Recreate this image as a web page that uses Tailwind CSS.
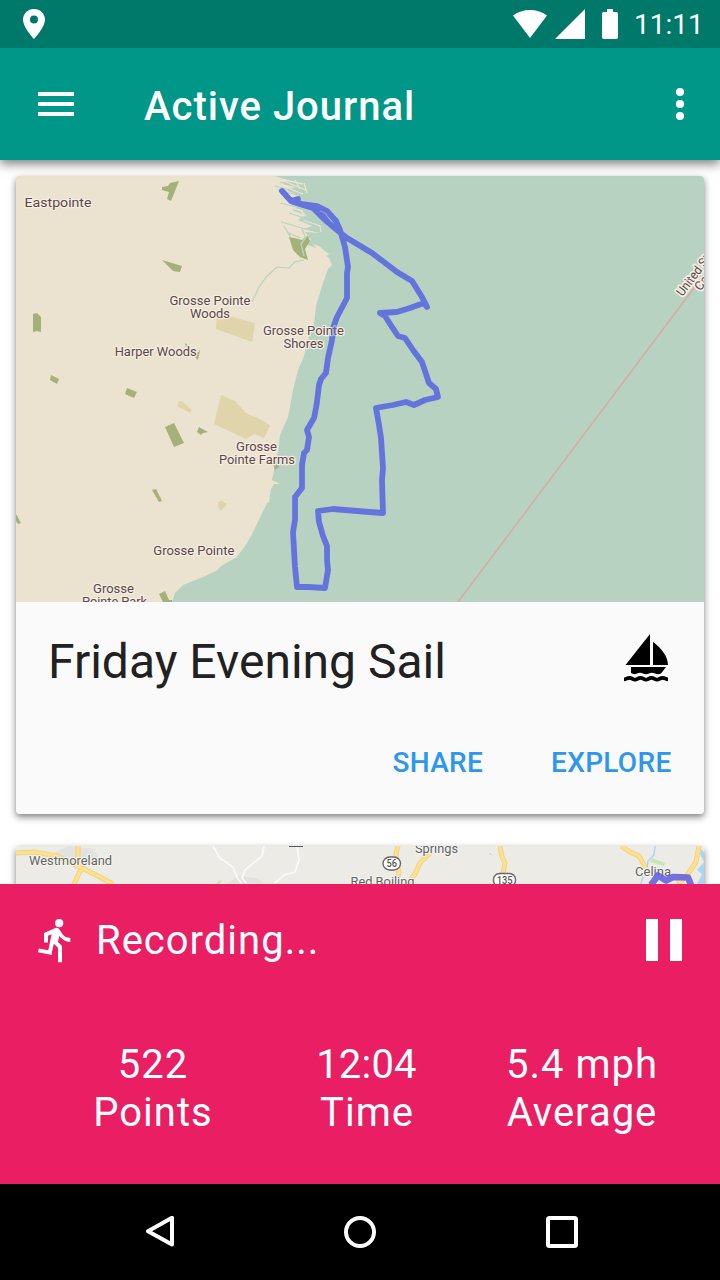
<!DOCTYPE html>
<html lang="en">
<head>
<meta charset="utf-8">
<title>Active Journal</title>
<script src="https://cdn.jsdelivr.net/npm/@tailwindcss/browser@4"></script>
</head>
<body class="bg-white">
<div class="flex h-[1280px] w-[720px] flex-col overflow-hidden bg-white font-['Roboto',sans-serif]">
  <div class="z-20 flex h-12 shrink-0 items-center bg-[#00796b] pr-[17px] pl-[23px] text-white">
    <svg class="h-[30px] w-[22px]" viewBox="0 0 22 30" fill="currentColor"><path fill-rule="evenodd" d="M11 0C4.900 0 0 4.800 0 10.500C0 18.400 11 30 11 30S22 18.400 22 10.500C22 4.800 17.100 0 11 0ZM11 14.500a4 4 0 1 1 0-8a4 4 0 0 1 0 8Z"/></svg>
    <div class="ml-auto flex items-center">
      <svg class="h-[30px] w-[108px]" viewBox="0 0 108 30" fill="currentColor">
        <path d="M1 6.500Q8.500 1 18 1T35 6.500L18 29Z"/>
        <path d="M73 0V30H43Z"/>
        <path d="M95 0h6v3h3.200a1.800 1.800 0 0 1 1.800 1.800v23.400a1.800 1.800 0 0 1-1.800 1.800h-12.400a1.800 1.800 0 0 1-1.800-1.800V4.800a1.800 1.800 0 0 1 1.800-1.800H95Z"/>
      </svg>
      <span class="mr-[-1px] ml-[14px] w-[70px] pt-[2px] text-[28px] leading-8 tracking-[0px]">11:11</span>
    </div>
  </div>
  <header class="z-10 flex h-28 shrink-0 items-center bg-[#009688] pr-9 pl-[38px] text-white shadow-[0_4px_10px_rgba(0,0,0,0.5)]">
    <svg class="h-6 w-9" viewBox="0 0 36 24" fill="currentColor"><path d="M0 0h36v4H0zM0 10h36v4H0zM0 20h36v4H0z"/></svg>
    <h1 class="ml-[70px] pt-1.5 text-[40px] leading-[48px] font-medium tracking-[1px]">Active Journal</h1>
    <svg class="ml-auto h-8 w-2 overflow-visible" viewBox="0 0 8 32" fill="currentColor"><circle cx="4" cy="4" r="4.100"/><circle cx="4" cy="16" r="4.100"/><circle cx="4" cy="28" r="4.100"/></svg>
  </header>
  <main class="flex h-[724px] shrink-0 flex-col gap-8 overflow-hidden px-4 pt-4">
    <article class="h-[638px] shrink-0 overflow-hidden rounded-[4px] bg-[#fafafa] shadow-[0_3px_7px_rgba(0,0,0,0.5)]">
      <svg class="block h-[426px] w-[688px]" viewBox="16 176 688 426">
        <rect x="16" y="176" width="688" height="426" fill="#b7d2c1"/>
        <path fill="#ebe3cf" d="M16 176H275L289 181L282 184L296 187L286 190L299 196L287 199L300 205L292 210L305 215L298 220L312 226L304 229L321 233L305 232L311 240L306 244L318 249L329 258L332 265L328 269L322 286L316 306L314 324L310 331L308 342L304 356L298 370L293 390L288 417L280 435L278 452L272 480L280 484L274 484L271 489L269 502L267 503L253 532L247 543L237 557L226 563L220 567L216 571L203 577L183 585L175 593L172 602H16Z"/>
        <g fill="none" stroke="#b7d2c1" stroke-width="1.200">
          <path d="M252 302L259 287L267 276L277 267L289 268L295 262L304 260"/>
          <path d="M275 186L290 190M278 190L297 195M280 203L301 208M281 222L302 228L318 232M284 226L291 238L304 241M287 232L300 238M302 229L305 236M280 182L300 186M289 213L304 218"/>
        </g>
        <g fill="none" stroke="#ebe3cf" stroke-width="1.300">
          <path d="M276 178L303 184M286 182L306 190M290 189L303 194M295 180L300 189M304 183L307 193M288 207L303 211M300 210L306 216M303 220L320 226L321 232"/>
        </g>
        <path fill="#ebe3cf" d="M313 244L319 246L329 254L327 256L320 253Z"/>
        <g fill="#a5b179">
          <path d="M162 187L168 186L170 183L179 181L175 191L171 201L167 199L169 192L162 190Z"/>
          <path d="M162 260L182 266L180 272L173 271Z"/>
          <path d="M33 314L37 313L41 317V332L37 331L33 332Z"/>
          <path d="M289 237L302 240L305 237L308 236L310 241L305 249L308 260L300 257L293 250Z"/>
          <path d="M51 375L59 379L57 384L50 380Z"/>
          <path d="M127 388L137 392L134 398L125 394Z"/>
          <path d="M165 427L174 423L184 443L174 447Z"/>
          <path d="M199 427L208 432L203 433L201 435L197 432Z"/>
          <path d="M152 490L156 489L162 501L159 502Z"/>
          <path d="M16 514L21 523L18 524L16 521Z"/>
          <path d="M159 594L165 591L169 600L172 600V602H163Z"/>
          <path d="M273 464H279V467L275 470Z"/>
          <path d="M185 343L188 345L186 347ZM194 356L200 350L198 360Z"/>
        </g>
        <path d="M306 237L301 244L304 256" stroke="#b7d2c1" stroke-width="1.500" fill="none"/>
        <g fill="#dfd4aa">
          <path d="M217 313L255 323L252 342L216 329Z"/>
          <path d="M221 395L235 401L246 413L264 421L270 426L264 438L254 434L246 439L214 424Z"/>
          <path d="M179 401L183 402L192 410L190 413L177 406Z"/>
          <path d="M218 502L222 501L227 504L221 511L218 507ZM220 500L227 504L222 507Z"/>
        </g>
        <path d="M458 602L685 300L704 275" stroke="#d9a8a0" stroke-width="1.300" fill="none"/>
        <path fill="none" stroke="#6574dd" stroke-width="5.800" stroke-linecap="round" stroke-linejoin="round" d="M282 191L291 201L298 199L293 202L313 208L324 219L337 230L347 238L372 253L397 272L412 281L422 297L427 307L424 303L410 308L397 312L380 313L385 316L392 327L398 336L405 338L413 350L422 362L425 371L429 383L436 389L438 397L425 400L414 405L406 402L393 405L387 406L376 408L379 425L381 438L383 468L382 480L383 513L357 511L333 509L318 511L319 522L323 536L327 546V560L328 570L325 588L308 587L297 587L295 567L293 532L295 520L295 497L302 488L302 465L304 453L307 450L309 437L307 430L314 418L316 408L317 402L319 385L321 379L326 373L328 358L332 340L333 328L337 317L347 298L347 273L348 267L345 247L340 230L336 221L327 211L317 206L302 204L291 201"/>
        <path d="M314 207L322 211L333 226L322 216Z" fill="#6574dd" stroke="#6574dd" stroke-width="2"/>
        <path d="M320 211L325 213L327 215" stroke="#8f9be0" stroke-width="1.200" fill="none"/>
        <g class="font-['Roboto']" font-size="13" fill="#5f4745" stroke="#f4eee5" stroke-width="2.500" stroke-linejoin="round" paint-order="stroke" text-anchor="middle">
          <text x="58" y="206.500" font-size="13.700" textLength="67" lengthAdjust="spacingAndGlyphs">Eastpointe</text>
          <text x="210" y="304.500" textLength="81" lengthAdjust="spacingAndGlyphs">Grosse Pointe</text>
          <text x="210" y="317.500" textLength="40" lengthAdjust="spacingAndGlyphs">Woods</text>
          <text x="303.500" y="334.500" textLength="81" lengthAdjust="spacingAndGlyphs">Grosse Pointe</text>
          <text x="303.500" y="347.500" textLength="40" lengthAdjust="spacingAndGlyphs">Shores</text>
          <text x="155.700" y="356" textLength="82" lengthAdjust="spacingAndGlyphs">Harper Woods</text>
          <text x="256.500" y="450.500" textLength="41" lengthAdjust="spacingAndGlyphs">Grosse</text>
          <text x="257" y="463.500" textLength="76" lengthAdjust="spacingAndGlyphs">Pointe Farms</text>
          <text x="193.800" y="555" textLength="81" lengthAdjust="spacingAndGlyphs">Grosse Pointe</text>
          <text x="113.500" y="592.500" textLength="41" lengthAdjust="spacingAndGlyphs">Grosse</text>
          <text x="114.500" y="605.500" textLength="65" lengthAdjust="spacingAndGlyphs">Pointe Park</text>
          <g text-anchor="start" stroke-width="3.500">
            <text transform="translate(682.500 297) rotate(-53)" font-size="12.600" textLength="70" lengthAdjust="spacingAndGlyphs">United States</text>
            <text transform="translate(700.500 291.500) rotate(-53)" font-size="12.600">Canada</text>
          </g>
        </g>
        <path d="M335 322L333 338" stroke="#6574dd" stroke-width="5" opacity=".5"/>
      </svg>
      <div class="flex h-[120px] items-center justify-between pr-9 pl-8">
        <h2 class="text-[48px] leading-[56px] text-[#212121]">Friday Evening Sail</h2>
        <svg class="mt-[-8px] h-[48px] w-[44px]" viewBox="0 0 44 48" fill="#000"><path d="M26 0V31H1.500ZM29 8C37 14 44 22 44 31H29ZM7 33H42L37 39.500Q34 41 31 39.500T25 39.500T19 39.500T13 39.500Q10 41 7 39Z"/><path d="M0 45.400C2 45.400 3 43.800 5.500 43.800S9 45.700 11 45.700S14 43.800 16.500 43.800S20 45.700 22 45.700S25 43.800 27.500 43.800S31 45.700 33 45.700S36 43.800 38.500 43.800S42 45.400 44 45.400" fill="none" stroke="#000" stroke-width="3.800"/></svg>
      </div>
      <div class="flex h-[82px] items-center justify-end gap-[68px] pr-[32.500px] text-[28px] leading-8 font-medium tracking-[0.3px] text-[#2c96f0]">
        <span>SHARE</span>
        <span>EXPLORE</span>
      </div>
    </article>
    <article class="h-[638px] shrink-0 overflow-hidden rounded-[4px] bg-[#ecebe6] shadow-[0_3px_7px_rgba(0,0,0,0.5)]">
      <svg class="block h-[38px] w-[688px]" viewBox="16 846 688 38">
        <rect x="16" y="846" width="688" height="38" fill="#ecebe6"/>
        <g fill="#e2e2df"><path d="M50 855L68 846L94 849L100 862L78 867ZM226 884L238 876L257 878L265 884Z"/></g>
        <g fill="none" stroke="#fafafa" stroke-width="1.800">
          <path d="M213 846L220 858L233 867L238 879L242 884M264 846L262 856L245 870L242 878L247 884M297 846L299 860L295 872L284 875L274 884"/>
        </g>
        <g fill="none" stroke-linejoin="round">
          <g stroke="#f2d07c" stroke-width="5"><path d="M16 853L34 852L57 856L78 866L94 874L113 884M78 846V860L81 869L74 884M398 846L396 854L397 864L399 872L396 884M430 853L420 863L415 874L408 884M500 846L502 857L505 863L503 874M621 846L630 852L639 856L647 870M699 846L696 862L688 874L678 884"/></g>
          <g stroke="#fbe08d" stroke-width="3.400"><path d="M16 853L34 852L57 856L78 866L94 874L113 884M78 846V860L81 869L74 884M398 846L396 854L397 864L399 872L396 884M430 853L420 863L415 874L408 884M500 846L502 857L505 863L503 874M621 846L630 852L639 856L647 870M699 846L696 862L688 874L678 884"/></g>
        </g>
        <g fill="none" stroke="#a9d7f3" stroke-width="1.500"><path d="M655 846L654 855L648 861L647 867M643 876L641 884"/></g>
        <path fill="#a9d7f3" d="M704 852L701 849L700 854L704 862L697 870L702 874L697 884H704ZM490 853L493 856L489 854Z"/>
        <path fill="#c5e8b6" d="M652 858L665 863L664 866L650 862ZM216 884L218 881L222 880L220 884Z"/>
        <path d="M289 846H303" stroke="#555" stroke-width="2"/>
        <g class="font-['Roboto']" font-size="13" fill="#636363" stroke="#f5f5f1" stroke-width="2" stroke-linejoin="round" paint-order="stroke" text-anchor="middle">
          <text x="70.500" y="864.500" textLength="83" lengthAdjust="spacingAndGlyphs">Westmoreland</text>
          <text x="436.500" y="852.500" textLength="43" lengthAdjust="spacingAndGlyphs">Springs</text>
          <text x="382.500" y="886" textLength="64" lengthAdjust="spacingAndGlyphs">Red Boiling</text>
          <text x="653" y="875.500" textLength="36" lengthAdjust="spacingAndGlyphs">Celina</text>
        </g>
        <path d="M651 885L658 875.500L666 880.500L673 877L688 877.500L691 885" fill="none" stroke="#6663df" stroke-width="6.500" stroke-linejoin="round" opacity=".9"/>
        <g fill="#fff" stroke="#666" stroke-width="1.400"><rect x="383" y="857" width="17.500" height="13" rx="6.500"/><rect x="493.500" y="873.500" width="22" height="13" rx="6"/></g>
        <g class="font-['Roboto']" font-size="10.500" font-weight="500" fill="#555" text-anchor="middle"><text x="391.700" y="867.300" textLength="10.500" lengthAdjust="spacingAndGlyphs">56</text><text x="504.700" y="884.300" textLength="16" lengthAdjust="spacingAndGlyphs">135</text></g>
      </svg>
    </article>
  </main>
  <section class="z-10 flex h-[300px] shrink-0 flex-col bg-[#e91e63] text-white">
    <div class="flex h-28 items-center pr-[38px] pl-[38px]">
      <svg class="mt-[2px] h-[44px] w-[33px]" viewBox="0 0 33 44" fill="currentColor"><circle cx="21.200" cy="4.200" r="4.100"/><path d="M13.800 33.300L15.800 24.700L20 28.700V43.200H24V27L20 22.900L21.200 17Q25.500 22.500 32.300 23V19Q26.500 18.800 23.700 14L21.700 10.700Q20.300 8.600 18 8.800L6 14V23.500H10V16.700L13.600 15.200L10.300 31.300L.8 29.400L0 33.300L13.800 36Z"/></svg>
      <span class="ml-[25px] pt-[2px] text-[40px] leading-[48px] tracking-[1px]">Recording...</span>
      <svg class="ml-auto h-[42px] w-9" viewBox="0 0 36 42" fill="currentColor"><path d="M0 0h12v42H0zM24 0h12v42H24z"/></svg>
    </div>
    <div class="flex pt-[45px] text-center text-[40px] leading-[48px] tracking-[1px]">
      <div class="ml-[46px] w-[214px]"><div>522</div><div>Points</div></div>
      <div class="w-[214px]"><div class="pr-[1px] tracking-[0.2px]">12:04</div><div>Time</div></div>
      <div class="w-[216px]"><div>5.4 mph</div><div>Average</div></div>
    </div>
  </section>
  <nav class="z-10 flex h-24 shrink-0 items-center justify-between bg-black pr-[142px] pl-[146px]">
    <svg class="h-8 w-7" viewBox="0 0 28 32" fill="none" stroke="#fff" stroke-width="4" stroke-linejoin="round"><path d="M26 1.800V28.500L2 15.200Z"/></svg>
    <svg class="h-8 w-8" viewBox="0 0 32 32" fill="none" stroke="#fff" stroke-width="4"><circle cx="16" cy="16" r="14"/></svg>
    <svg class="h-8 w-8" viewBox="0 0 32 32" fill="none" stroke="#fff" stroke-width="4"><rect x="2" y="2" width="28" height="28" rx="1.500"/></svg>
  </nav>
</div>
</body>
</html>
